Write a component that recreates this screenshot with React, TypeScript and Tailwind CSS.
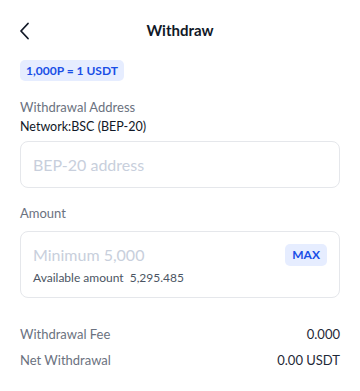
const font = { fontFamily: "Lato, 'Noto Sans', sans-serif" };

const Row = ({ label, value }: { label: string; value: string }) => (
  <div className="flex items-center justify-between leading-[19px]">
    <span className="text-[13px] text-[#6b7280]">{label}</span>
    <span className="text-[13px] text-[#1f2937]">{value}</span>
  </div>
);

const App = () => {
  return (
    <div className="w-[360px] h-[391px] bg-white overflow-hidden" style={font}>
      <div className="relative flex items-center justify-center h-[56px] pt-[4px]">
        <button className="absolute left-[16px] top-[20px] p-[2px]">
          <svg width="14" height="18" viewBox="0 0 14 18" fill="none">
            <path
              d="M10 1.5L3 9l7 7.5"
              stroke="#111827"
              strokeWidth="1.8"
              strokeLinecap="round"
              strokeLinejoin="round"
            />
          </svg>
        </button>
        <h1 className="text-[15px] font-bold text-[#111827]">Withdraw</h1>
      </div>

      <div className="px-5">
        <div className="mt-[4px] flex w-fit items-center h-[21px] px-[6px] rounded-[5px] bg-[#e6edff] text-[12px] font-bold text-[#1a4fe6]">
          1,000P = 1 USDT
        </div>

        <div className="mt-[17px] text-[13px] leading-[19px] text-[#6b7280]">Withdrawal Address</div>
        <div className="text-[12.5px] leading-[19px] text-[#111827]">Network:BSC (BEP-20)</div>
        <div className="mt-[5px] h-[47px] flex items-center px-[12px] rounded-[8px] border border-[#e5e7eb]">
          <span className="text-[16px] text-[#c8cfdc]">BEP-20 address</span>
        </div>

        <div className="mt-[16px] text-[13px] leading-[19px] text-[#6b7280]">Amount</div>
        <div className="mt-[8px] h-[67px] flex flex-col justify-center px-[12px] rounded-[8px] border border-[#e5e7eb]">
          <div className="flex items-center justify-between">
            <span className="text-[16px] text-[#c8cfdc]">Minimum 5,000</span>
            <span className="h-[22px] px-[7px] flex items-center rounded-[5px] bg-[#e6edff] text-[12px] font-bold text-[#1a4fe6]">
              MAX
            </span>
          </div>
          <div className="mt-[2px] text-[12px] text-[#4b5563]">
            Available amount&nbsp;&nbsp;5,295.485
          </div>
        </div>

        <div className="mt-[27px] flex flex-col gap-[7px]">
          <Row label="Withdrawal Fee" value="0.000" />
          <Row label="Net Withdrawal" value="0.00 USDT" />
        </div>
      </div>
    </div>
  );
};

export default App;
